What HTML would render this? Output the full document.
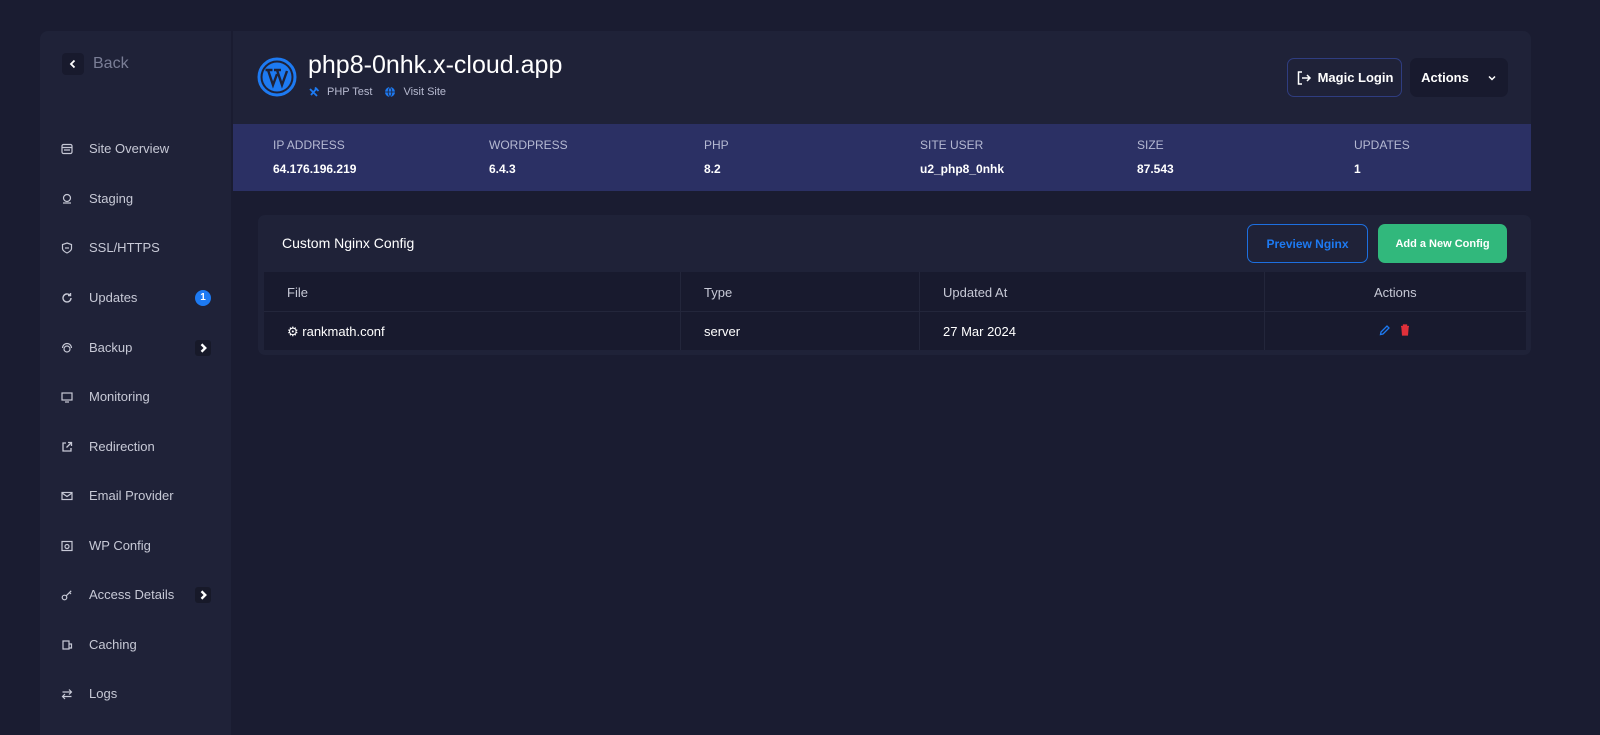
<!DOCTYPE html>
<html><head><meta charset="utf-8"><style>
*{box-sizing:border-box;margin:0;padding:0}
body{width:1600px;height:735px;background:#1a1c31;font-family:"Liberation Sans",sans-serif;color:#fff;position:relative;overflow:hidden}
.side{position:absolute;left:40px;top:31px;width:191px;height:704px;background:#1f2238;border-radius:8px 0 0 0}
.back{position:absolute;left:22px;top:22px;display:flex;align-items:center;color:#7a7e96;font-size:16px}
.back .b{width:22px;height:22px;background:#181a2d;border-radius:4px;display:flex;align-items:center;justify-content:center;margin-right:9px}
.item{position:absolute;left:21px;display:flex;align-items:center;font-size:13px;color:#c7c9d6;width:150px}
.item svg{width:12px;height:12px;margin-right:16px}
.badge{position:absolute;right:0;width:16px;height:16px;border-radius:50%;background:#1d7af2;font-size:10px;font-weight:bold;display:flex;align-items:center;justify-content:center;color:#fff}
.chev{position:absolute;right:0;width:16px;height:16px;border-radius:3px;background:#171929;display:flex;align-items:center;justify-content:center}
.main{position:absolute;left:233px;top:31px;width:1298px;height:93px;background:#1f2238;border-radius:0 8px 0 0}
.stats{position:absolute;left:233px;top:124px;width:1298px;height:67px;background:#2b3064}
.st{position:absolute;top:14px;font-size:12px;color:#b5b9d2}
.st b{display:block;margin-top:10px;font-size:12px;color:#fff;font-weight:bold}
.btn{position:absolute;border-radius:7px;font-size:13px;font-weight:bold;display:flex;align-items:center;justify-content:center}
.card{position:absolute;left:258px;top:215px;width:1273px;height:140px;background:#1f2238;border-radius:7px}
.tbl{position:absolute;left:6px;top:57px;width:1262px;height:78px;background:#181a2e}
.tbl .row{position:absolute;left:0;width:100%;height:39px;font-size:13px}
.tbl span{position:absolute;top:13px}
.vl{position:absolute;top:0;width:1px;height:78px;background:#23263b}
</style></head><body>
<div class="side">
 <div class="back"><div class="b"><svg width="10" height="10" viewBox="0 0 10 10"><path d="M6.5 1.5 3 5l3.5 3.5" stroke="#fff" stroke-width="1.8" fill="none"/></svg></div>Back</div>
 <div class="item" style="top:110px"><svg viewBox="0 0 12 12"><rect x="1" y="1.5" width="10" height="9" rx="1.5" stroke="#c7c9d6" fill="none" stroke-width="1.2"/><path d="M1 4.5h10M3 7h6" stroke="#c7c9d6" stroke-width="1.2"/></svg>Site Overview</div>
 <div class="item" style="top:160px"><svg viewBox="0 0 12 12"><circle cx="6" cy="5" r="3.5" stroke="#c7c9d6" fill="none" stroke-width="1.2"/><path d="M2 10h8" stroke="#c7c9d6" stroke-width="1.2"/></svg>Staging</div>
 <div class="item" style="top:209px"><svg viewBox="0 0 12 12"><path d="M6 1 10.5 2.5v4C10.5 9 6 11 6 11S1.5 9 1.5 6.5v-4Z" stroke="#c7c9d6" fill="none" stroke-width="1.2"/><path d="M4 6h4" stroke="#c7c9d6" stroke-width="1.2"/></svg>SSL/HTTPS</div>
 <div class="item" style="top:259px"><svg viewBox="0 0 12 12"><path d="M10 6a4 4 0 1 1-1.2-2.9M9.5 1v2.5H7" stroke="#c7c9d6" fill="none" stroke-width="1.4"/></svg>Updates<div class="badge">1</div></div>
 <div class="item" style="top:309px"><svg viewBox="0 0 12 12"><circle cx="6" cy="7" r="3" stroke="#c7c9d6" fill="none" stroke-width="1.2"/><path d="M1.5 6a4.5 4.5 0 0 1 9 0" stroke="#c7c9d6" fill="none" stroke-width="1.2"/></svg>Backup<div class="chev"><svg width="8" height="8" viewBox="0 0 8 8" style="margin:0"><path d="M3 1.5 5.5 4 3 6.5" stroke="#fff" stroke-width="1.6" fill="none"/></svg></div></div>
 <div class="item" style="top:358px"><svg viewBox="0 0 12 12"><rect x="1" y="2" width="10" height="7" stroke="#c7c9d6" fill="none" stroke-width="1.2"/><path d="M4 11h4" stroke="#c7c9d6" stroke-width="1.2"/></svg>Monitoring</div>
 <div class="item" style="top:408px"><svg viewBox="0 0 12 12"><path d="M5 2H2v8h8V7M7 1.5h3.5V5M10.5 1.5 5.5 6.5" stroke="#c7c9d6" fill="none" stroke-width="1.3"/></svg>Redirection</div>
 <div class="item" style="top:457px"><svg viewBox="0 0 12 12"><rect x="1" y="2.5" width="10" height="7" stroke="#c7c9d6" fill="none" stroke-width="1.2"/><path d="m1 3 5 3.5L11 3" stroke="#c7c9d6" fill="none" stroke-width="1.2"/></svg>Email Provider</div>
 <div class="item" style="top:507px"><svg viewBox="0 0 12 12"><rect x="1" y="1.5" width="10" height="9" stroke="#c7c9d6" fill="none" stroke-width="1.2"/><circle cx="6" cy="6.5" r="2" stroke="#c7c9d6" fill="none" stroke-width="1.2"/></svg>WP Config</div>
 <div class="item" style="top:556px"><svg viewBox="0 0 12 12"><circle cx="3.5" cy="8.5" r="2.3" stroke="#c7c9d6" fill="none" stroke-width="1.2"/><path d="m5.2 6.8 5-5M8.5 3.5l1.5 1.5" stroke="#c7c9d6" fill="none" stroke-width="1.2"/></svg>Access Details<div class="chev"><svg width="8" height="8" viewBox="0 0 8 8" style="margin:0"><path d="M3 1.5 5.5 4 3 6.5" stroke="#fff" stroke-width="1.6" fill="none"/></svg></div></div>
 <div class="item" style="top:606px"><svg viewBox="0 0 12 12"><path d="M2 2h6v8H2zM8 5h2.5v4H8" stroke="#c7c9d6" fill="none" stroke-width="1.2"/></svg>Caching</div>
 <div class="item" style="top:655px"><svg viewBox="0 0 12 12"><path d="M1.5 4h9M8 1.5 10.5 4 8 6.5M10.5 8.5h-9M4 6l-2.5 2.5L4 11" stroke="#c7c9d6" fill="none" stroke-width="1.2"/></svg>Logs</div>
</div>
<div class="main">
 <svg style="position:absolute;left:24px;top:26px" width="40" height="40" viewBox="0 0 40 40"><circle cx="20" cy="20" r="18" fill="none" stroke="#1d7af2" stroke-width="3"/><circle cx="20" cy="20" r="14.5" fill="#1d7af2"/><path d="M8.5 13h7M11 13l5 15 4-11M17 13h7M20 13l5 15 5-14" stroke="#1f2238" stroke-width="2.4" fill="none"/></svg>
 <div style="position:absolute;left:75px;top:20px;font-size:25px;color:#fff">php8-0nhk.x-cloud.app</div>
 <div style="position:absolute;left:75px;top:55px;font-size:11px;color:#b7bad0;display:flex;align-items:center">
  <svg width="12" height="12" viewBox="0 0 12 12" style="margin-right:7px"><path d="M2 3 9 10M9 2 3 9M7 1.5 10.5 5" stroke="#1d7af2" stroke-width="1.8" fill="none"/></svg>PHP Test
  <svg width="12" height="12" viewBox="0 0 12 12" style="margin:0 7px 0 12px"><circle cx="6" cy="6" r="5" fill="#1d7af2"/><path d="M1 6h10M6 1c-2.5 3-2.5 7 0 10M6 1c2.5 3 2.5 7 0 10" stroke="#1f2238" stroke-width=".8" fill="none"/></svg>Visit Site
 </div>
 <div class="btn" style="left:1054px;top:27px;width:115px;height:39px;border:1px solid #2f3d80;color:#fff"><svg width="16" height="16" viewBox="0 0 16 16" style="margin-right:6px"><path d="M6 2H2.5v12H6M6 8h8M11 5l3 3-3 3" stroke="#fff" stroke-width="1.5" fill="none"/></svg>Magic Login</div>
 <div class="btn" style="left:1177px;top:27px;width:98px;height:39px;background:#181a2e;color:#fff">Actions<svg width="10" height="10" viewBox="0 0 10 10" style="margin-left:18px"><path d="m2 3.5 3 3 3-3" stroke="#fff" stroke-width="1.5" fill="none"/></svg></div>
</div>
<div class="stats">
 <div class="st" style="left:40px">IP ADDRESS<b>64.176.196.219</b></div>
 <div class="st" style="left:256px">WORDPRESS<b>6.4.3</b></div>
 <div class="st" style="left:471px">PHP<b>8.2</b></div>
 <div class="st" style="left:687px">SITE USER<b>u2_php8_0nhk</b></div>
 <div class="st" style="left:904px">SIZE<b>87.543</b></div>
 <div class="st" style="left:1121px">UPDATES<b>1</b></div>
</div>
<div class="card">
 <div style="position:absolute;left:24px;top:20px;font-size:14px;color:#fff">Custom Nginx Config</div>
 <div class="btn" style="left:989px;top:9px;width:121px;height:39px;border:1.5px solid #1d6fe0;color:#1d7af2;font-size:12px">Preview Nginx</div>
 <div class="btn" style="left:1120px;top:9px;width:129px;height:39px;background:#31b87c;color:#fff;font-size:11px">Add a New Config</div>
 <div class="tbl">
  <div class="vl" style="left:416px"></div><div class="vl" style="left:655px"></div><div class="vl" style="left:1000px"></div>
  <div style="position:absolute;left:0;top:39px;width:100%;height:1px;background:#23263b"></div>
  <div class="row" style="top:0;color:#c7c9d6"><span style="left:23px">File</span><span style="left:440px">Type</span><span style="left:679px">Updated At</span><span style="left:1110px">Actions</span></div>
  <div class="row" style="top:39px;color:#fff"><span style="left:23px">⚙ rankmath.conf</span><span style="left:440px">server</span><span style="left:679px">27 Mar 2024</span>
   <svg style="position:absolute;left:1115px;top:14px" width="11" height="11" viewBox="0 0 11 11"><path d="M1.5 9.5 2 7 8 1l2 2-6 6Z" stroke="#1d7af2" stroke-width="1.3" fill="none"/></svg>
   <svg style="position:absolute;left:1136px;top:13px" width="10" height="12" viewBox="0 0 10 12"><path d="M1 2.5h8M3.5 2.5V1h3v1.5M2 3.5l.6 7.5h4.8L8 3.5Z" stroke="#e0303a" stroke-width="1.3" fill="#e0303a"/></svg>
  </div>
 </div>
</div>
</body></html>
